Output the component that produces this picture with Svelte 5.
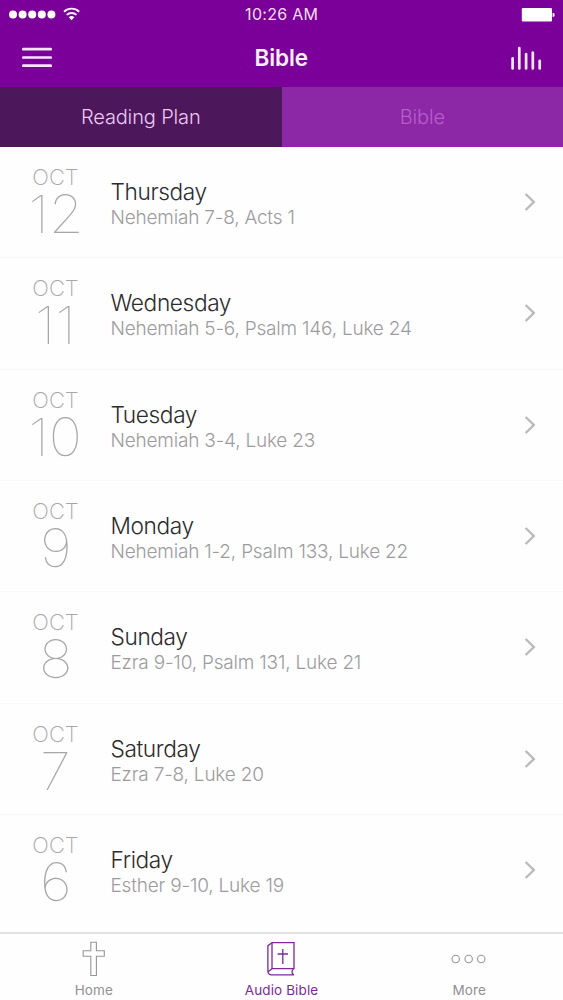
<!--
  Bible reading plan screen
  Status bar, nav bar, two segments, list of days and the bottom tab bar
-->
<script lang="ts">
    interface Day {
        date: number;
        name: string;
        passage: string;
    }

    const days: Day[] = [
        { date: 12, name: "Thursday", passage: "Nehemiah 7-8, Acts 1" },
        { date: 11, name: "Wednesday", passage: "Nehemiah 5-6, Psalm 146, Luke 24" },
        { date: 10, name: "Tuesday", passage: "Nehemiah 3-4, Luke 23" },
        { date: 9, name: "Monday", passage: "Nehemiah 1-2, Psalm 133, Luke 22" },
        { date: 8, name: "Sunday", passage: "Ezra 9-10, Psalm 131, Luke 21" },
        { date: 7, name: "Saturday", passage: "Ezra 7-8, Luke 20" },
        { date: 6, name: "Friday", passage: "Esther 9-10, Luke 19" }
    ];

    let segment = $state("plan");
</script>

<div class="screen">
    <header class="header">
        <div class="status">
            <svg class="status__signal" width="72" height="16" viewBox="0 0 72 16" fill="#fff">
                {#each [4, 13.6, 23.2, 32.8, 42.4] as cx}
                    <circle {cx} cy="7.5" r="4" />
                {/each}
                <g fill="none" stroke="#fbeffd" stroke-width="1.9">
                    <path d="M55 4.7a11 11 0 0 1 15.2 0" />
                    <path d="M57.7 7.9a7.2 7.2 0 0 1 9.8 0" />
                </g>
                <path d="M62.6 13.2l-2.8-2.9a4.2 4.2 0 0 1 5.6 0z" />
            </svg>
            <span class="status__time">10:26 AM</span>
            <svg class="status__battery" width="34" height="14" viewBox="0 0 34 14" fill="#fff">
                <rect x="0.8" width="30.2" height="13.5" rx="1.2" />
                <path d="M31.6 4.8a2 2 0 0 1 0 4.2z" />
            </svg>
        </div>
        <div class="nav">
            <button class="nav__button" aria-label="Menu">
                <svg width="30" height="24" viewBox="0 0 30 24" stroke="#f6e6fb" stroke-width="2.7" stroke-linecap="round">
                    <path d="M1.3 3.2h27.4M1.3 11.5h27.4M1.3 19.7h27.4" />
                </svg>
            </button>
            <h1 class="nav__title">Bible</h1>
            <button class="nav__button" aria-label="Player">
                <svg width="31" height="24" viewBox="0 0 31 24" stroke="#f6e6fb" stroke-width="2.7" stroke-linecap="round">
                    <path d="M1.6 12.4v10.1M8.3 2.2v20.3M15.1 8.2v14.3M21.8 6.6v15.9M28.7 14.8v7.7" />
                </svg>
            </button>
        </div>
    </header>

    <div class="segments">
        <button class="segment" class:active={segment === "plan"} onclick={() => (segment = "plan")}>Reading Plan</button>
        <button class="segment" class:active={segment === "bible"} onclick={() => (segment = "bible")}>Bible</button>
    </div>

    <main class="days">
        {#each days as day (day.date)}
            <div class="day">
                <div class="day__date">
                    <span class="day__month">OCT</span>
                    <span class="day__number">{day.date}</span>
                </div>
                <div class="day__info">
                    <div class="day__name">{day.name}</div>
                    <div class="day__passage">{day.passage}</div>
                </div>
                <svg class="day__arrow" width="12" height="20" viewBox="0 0 12 20" fill="none" stroke="#bab9bb" stroke-width="2.4">
                    <path d="M1.6 2L9.8 10L1.6 18" />
                </svg>
            </div>
        {/each}
    </main>

    <nav class="tabs">
        <div class="tab">
            <svg width="24" height="36" viewBox="0 0 24 36" fill="none" stroke="#97959a" stroke-width="1.1">
                <path d="M8.8 1.2h5.6v8.6h7.9v5.4h-7.9v19.3H8.8V15.2H1.2V9.8h7.6z" />
            </svg>
            <span>Home</span>
        </div>
        <div class="tab active">
            <svg width="28" height="36" viewBox="0 0 28 36" fill="none" stroke="#7c2a9a" stroke-width="1.3">
                <path d="M5 1.7h22v26H5z" />
                <path d="M5 1.7L.9 4.7v25.6c0 2.3 1.2 3.5 3.8 3.5H27M5 27.7L.9 31M26.5 27.7c-2 1.8-2 4.3 0 6.1" />
                <path d="M15.8 8v15M10.6 13h10.4" />
            </svg>
            <span>Audio Bible</span>
        </div>
        <div class="tab">
            <svg width="36" height="36" viewBox="0 0 36 36" fill="none" stroke="#97959a" stroke-width="1.1">
                <circle cx="4.7" cy="18" r="3.7" />
                <circle cx="17.7" cy="18" r="3.7" />
                <circle cx="30.2" cy="18" r="3.7" />
            </svg>
            <span>More</span>
        </div>
    </nav>
</div>

<style>
    :global(body) {
        background: #fefefe;
    }

    .screen {
        display: flex;
        flex-direction: column;
        width: 563px;
        height: 1000px;
        overflow: hidden;
        font-family: Inter, "Liberation Sans", sans-serif;
    }

    button {
        margin: 0;
        padding: 0;
        border: none;
        background: none;
        font-family: inherit;
        cursor: pointer;
    }

    svg {
        display: block;
        flex-shrink: 0;
    }

    .header {
        height: 87px;
        flex-shrink: 0;
        background: #7b0099;
    }

    .status {
        display: grid;
        grid-template-columns: 1fr auto 1fr;
        align-items: center;
        height: 29px;
        padding: 0 8px 0 8.5px;
    }

    .status__time {
        color: #f3dff8;
        font-size: 16px;
        line-height: 29px;
        letter-spacing: 0.3px;
    }

    .status__battery {
        justify-self: end;
    }

    .nav {
        display: flex;
        align-items: center;
        justify-content: space-between;
        height: 57px;
        padding: 0 21.5px 0 22px;
    }

    .nav__title {
        margin: 0;
        color: #fbeffd;
        font-size: 22.5px;
        font-weight: 600;
        line-height: 28px;
        letter-spacing: -0.1px;
    }

    .segments {
        display: grid;
        grid-template-columns: 1fr 1fr;
        height: 60px;
        flex-shrink: 0;
    }

    .segment {
        background: #8c27a5;
        color: #b45fca;
        font-size: 20px;
        font-weight: 300;
        letter-spacing: -0.15px;
    }

    .segment.active {
        background: #4c175b;
        color: #ecc9f3;
    }

    .days {
        flex: 1;
        min-height: 0;
        overflow: hidden;
    }

    .day {
        display: flex;
        box-sizing: border-box;
        height: 111.35px;
        padding-right: 27px;
        border-bottom: 1px solid #f8f8f8;
    }

    .day:last-child {
        border-bottom: none;
    }

    .day__date {
        display: flex;
        flex-direction: column;
        align-items: center;
        width: 111px;
        color: #a8a6a9;
    }

    .day__month {
        margin-top: 19px;
        font-size: 22px;
        font-weight: 200;
        line-height: 23px;
    }

    .day__number {
        font-size: 52.5px;
        font-weight: 100;
        line-height: 51px;
        transform: scaleX(1.07);
    }

    .day__info {
        flex: 1;
        margin-left: -0.5px;
        padding-top: 30px;
    }

    .day__name {
        color: #2d2b2e;
        font-size: 22.7px;
        font-weight: 300;
        line-height: 30px;
        letter-spacing: -0.4px;
    }

    .day__passage {
        color: #9d9b9e;
        font-size: 19px;
        font-weight: 300;
        line-height: 22px;
        letter-spacing: -0.2px;
    }

    .day__arrow {
        margin-top: 45px;
    }

    .tabs {
        display: grid;
        grid-template-columns: repeat(3, 1fr);
        box-sizing: border-box;
        height: 68px;
        flex-shrink: 0;
        border-top: 2px solid #e3e1e4;
    }

    .tab {
        display: flex;
        flex-direction: column;
        align-items: center;
        padding-top: 7px;
        color: #929094;
        font-size: 13.5px;
        line-height: 18px;
    }

    .tab span {
        margin-top: 4px;
        letter-spacing: 0.12px;
    }

    .tab.active {
        color: #7c2a9a;
    }
</style>
